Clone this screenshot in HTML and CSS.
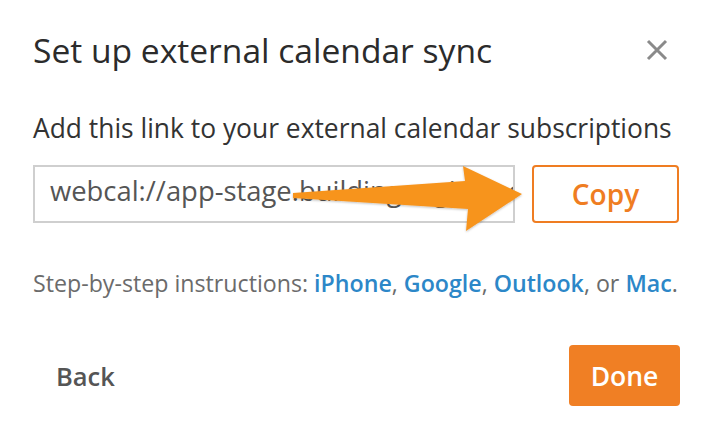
FILE: index.html
```html
<!DOCTYPE html>
<html>
<head>
<meta charset="utf-8">
<link rel="stylesheet" href="styles.css">
</head>
<body>
<div class="dialog">
  <div class="header">
    <h1 class="title">Set up external calendar sync</h1>
    <button class="close" aria-label="Close">
      <svg width="22" height="22" viewBox="0 0 22 22"><path d="M2 2 L20 20 M20 2 L2 20" stroke="#8a8a8a" stroke-width="3" stroke-linecap="butt"/></svg>
    </button>
  </div>
  <p class="desc">Add this link to your external calendar subscriptions</p>
  <div class="link-row">
    <div class="link-input">webcal://app-stage.buildingengines.com/calendar/feed</div>
    <button class="copy">Copy</button>
    <svg class="arrow" width="250" height="80" viewBox="0 0 250 80">
      <defs>
        <filter id="sh" x="-10%" y="-20%" width="120%" height="140%">
          <feDropShadow dx="0" dy="1" stdDeviation="1" flood-color="#000" flood-opacity="0.25"/>
        </filter>
      </defs>
      <path filter="url(#sh)" fill="#f7941e" d="M3 33 L175 21 L173 6 L232 34 L176 71 L178 49 L3 38 Z"/>
    </svg>
  </div>
  <p class="help">Step-by-step instructions: <a href="#">iPhone</a>, <a href="#">Google</a>, <a href="#">Outlook</a>, or <a href="#">Mac</a>.</p>
  <div class="footer">
    <button class="back">Back</button>
    <button class="done">Done</button>
  </div>
</div>
</body>
</html>
```
FILE: styles.css
```css
* { box-sizing: border-box; }
html, body { margin: 0; padding: 0; background: #fff; }
body { font-family: "Open Sans", Lato, sans-serif; width: 712px; height: 440px; overflow: hidden; }
.dialog { padding: 28px 32px 0 33px; }
.header { display: flex; justify-content: space-between; align-items: center; }
.title { margin: 0; font-size: 33.6px; font-weight: 400; color: #2b2b2b; line-height: 44px; white-space: nowrap; }
.close { border: 0; background: none; padding: 0; width: 22px; height: 22px; margin-right: 12px; display: flex; flex: none; }
.desc { margin: 39px 0 0; font-size: 26.4px; color: #333; line-height: 34px; white-space: nowrap; }
.link-row { position: relative; display: flex; gap: 17px; margin-top: 20px; height: 58px; }
.link-input { width: 482px; border: 2px solid #cfcfcf; font-size: 27.4px; color: #555; padding: 0 15px; line-height: 47px; white-space: nowrap; overflow: hidden; }
.copy { width: 147px; border: 2px solid #ef7d22; border-radius: 4px; background: #fff; color: #ef7d22; font-family: inherit; font-size: 28px; font-weight: 600; }
.arrow { position: absolute; left: 257px; top: -5px; }
.help { margin: 46px 0 0; font-size: 23.2px; color: #6b6b6b; line-height: 28px; white-space: nowrap; }
.help a { color: #2c87c8; text-decoration: none; font-weight: 600; }
.footer { display: flex; justify-content: space-between; align-items: center; margin-top: 48px; }
.back { border: 0; background: none; padding: 0 0 0 23px; font-family: inherit; font-size: 25.5px; font-weight: 600; color: #555; }
.done { width: 111px; height: 61px; border: 0; border-radius: 4px; background: #f07f24; color: #fff; font-family: inherit; font-size: 26.5px; font-weight: 600; }
```
